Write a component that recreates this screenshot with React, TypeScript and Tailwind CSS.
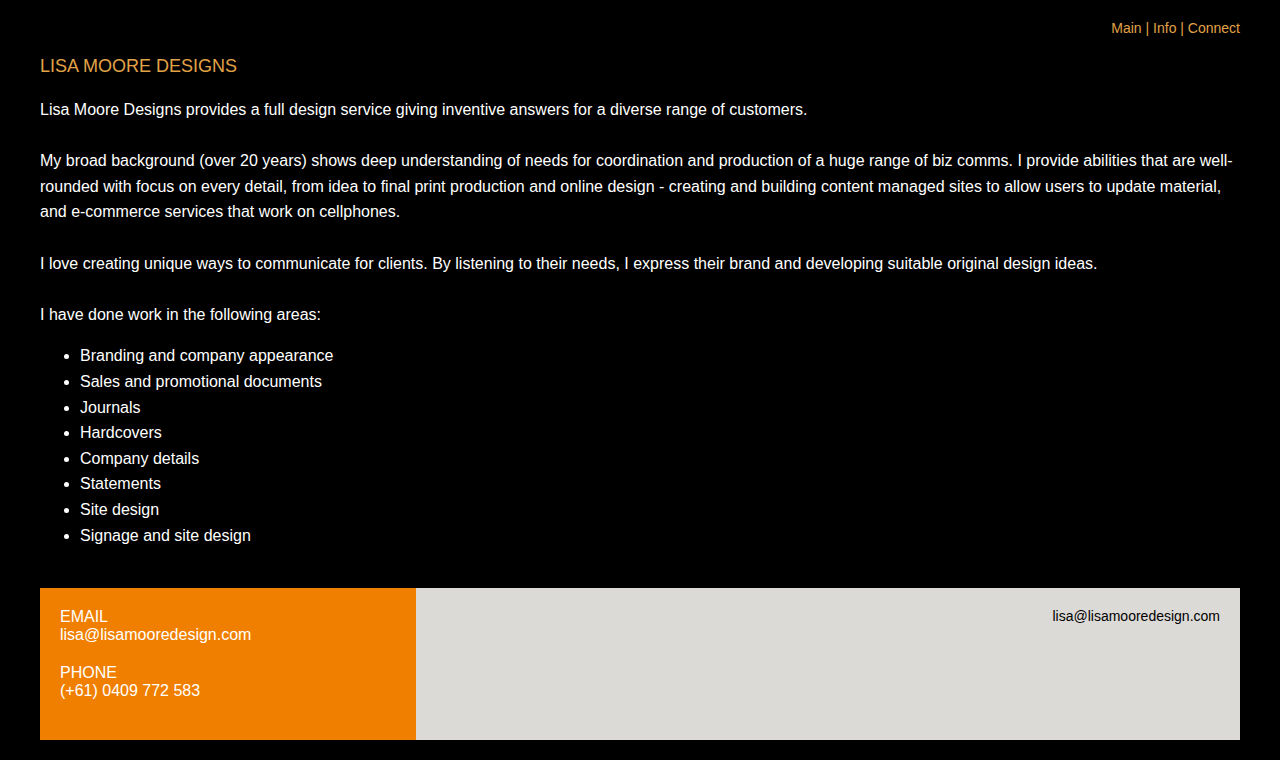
const areas = [
  "Branding and company appearance",
  "Sales and promotional documents",
  "Journals",
  "Hardcovers",
  "Company details",
  "Statements",
  "Site design",
  "Signage and site design",
]

export default function App() {
  return (
    <div
      className="min-h-screen bg-black px-10 pt-5 pb-5 text-white"
      style={{ fontFamily: '"Liberation Sans", Arial, sans-serif' }}
    >
      {/* Top nav */}
      <nav className="text-right text-sm leading-4 text-[#e2a347]">
        <a href="#">Main</a> | <a href="#">Info</a> | <a href="#">Connect</a>
      </nav>

      <h1 className="mt-[19px] text-lg leading-[22px] text-[#e2a347]">LISA MOORE DESIGNS</h1>

      <div className="mt-5 text-base leading-[1.6]">
        <p>Lisa Moore Designs provides a full design service giving inventive answers for a diverse range of customers.</p>
        <p className="mt-[1.6em]">
          My broad background (over 20 years) shows deep understanding of needs for coordination and production of a
          huge range of biz comms. I provide abilities that are well-rounded with focus on every detail, from idea to
          final print production and online design - creating and building content managed sites to allow users to
          update material, and e-commerce services that work on cellphones.
        </p>
        <p className="mt-[1.6em]">
          I love creating unique ways to communicate for clients. By listening to their needs, I express their brand and
          developing suitable original design ideas.
        </p>
        <p className="mt-[1.6em]">I have done work in the following areas:</p>
        <ul className="mt-4 list-disc pl-10">
          {areas.map((a) => (
            <li key={a}>{a}</li>
          ))}
        </ul>
      </div>

      {/* Footer */}
      <footer className="mt-10 flex h-[152px]">
        <div className="w-[376px] bg-[#f07f00] px-5 pt-5 text-base leading-[18px] text-white">
          <div>
            EMAIL
            <br />
            lisa@lisamooredesign.com
          </div>
          <div className="mt-5">
            PHONE
            <br />
            (+61) 0409 772 583
          </div>
        </div>
        <div className="flex-1 bg-[#dcdad7] p-5 text-right text-sm leading-4 text-black">
          lisa@lisamooredesign.com
        </div>
      </footer>
    </div>
  )
}
